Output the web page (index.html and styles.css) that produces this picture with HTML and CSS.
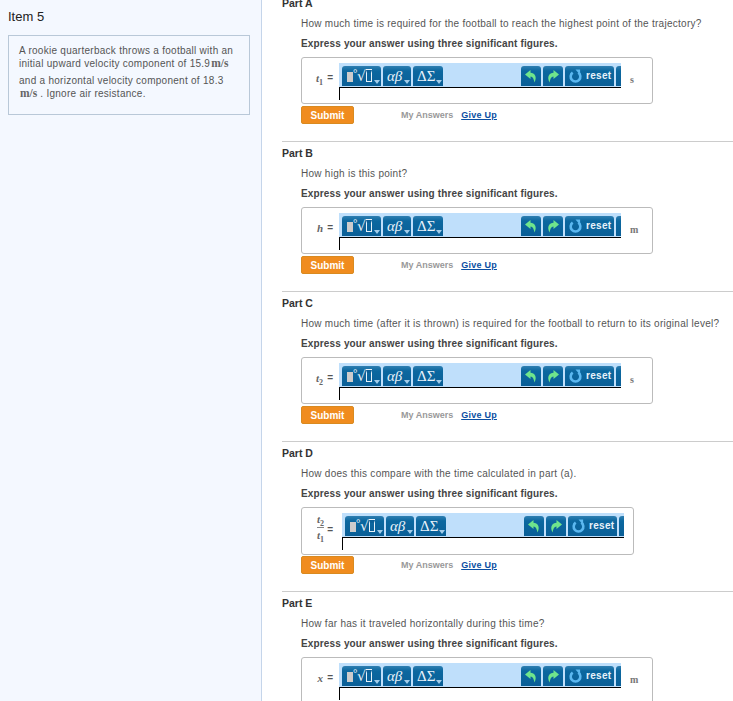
FILE: index.html
```html
<!DOCTYPE html>
<html lang="en">
<head>
    <meta charset="UTF-8">
    <title>Item 5</title>
    <link rel="stylesheet" href="styles.css">
</head>
<body>
<svg class="defs" width="0" height="0">
    <symbol id="undo" viewBox="0 0 16 16"><path d="M2 6.5 L7.5 2 L7.5 4.8 C11.5 5 14.5 8.5 11.5 14.5 C10.8 10.8 10 8.8 7.5 8.4 L7.5 11 Z"/></symbol>
    <symbol id="redo" viewBox="0 0 16 16"><path d="M14 6.5 L8.5 2 L8.5 4.8 C4.5 5 1.5 8.5 4.5 14.5 C5.2 10.8 6 8.8 8.5 8.4 L8.5 11 Z"/></symbol>
    <symbol id="circle-arrow" viewBox="0 0 14 14"><path class="ring" d="M4 3.4 A5.2 5.2 0 1 0 10 3.4"/><path class="head" d="M7 0 L12 0 L12 6 Z"/></symbol>
</svg>
<div class="page">
    <aside class="sidebar">
        <h2 class="item-title">Item 5</h2>
        <div class="intro">
            <p>A rookie quarterback throws a football with an initial upward velocity component of 15.9<span class="unit">m/s</span></p>
            <p>and a horizontal velocity component of 18.3 <span class="unit">m/s</span> . Ignore air resistance.</p>
        </div>
    </aside>
    <main class="content">
        <section class="part part-a">
            <h3>Part A</h3>
            <p class="question">How much time is required for the football to reach the highest point of the trajectory?</p>
            <p class="instruction">Express your answer using three significant figures.</p>
            <div class="answer-box">
                <span class="var"><i>t</i><sub>1</sub></span><span class="eq">=</span>
                <div class="editor">
                    <div class="toolbar">
                        <span class="tool templates"><b class="blank"></b><b class="deg">°</b><b class="root">√</b><b class="box"></b><u></u></span>
                        <span class="tool greek"><i>αβ</i><u></u></span>
                        <span class="tool symbols">ΔΣ<u></u></span>
                        <span class="tool arrow push"><svg><use href="#undo"/></svg></span>
                        <span class="tool arrow"><svg><use href="#redo"/></svg></span>
                        <span class="tool reset"><svg><use href="#circle-arrow"/></svg>reset</span>
                        <span class="tool stub"></span>
                    </div>
                    <div class="field"></div>
                </div>
                <span class="answer-unit">s</span>
            </div>
            <div class="actions"><button>Submit</button><span class="my-answers">My Answers</span><a>Give Up</a></div>
        </section>
        <section class="part">
            <h3>Part B</h3>
            <p class="question">How high is this point?</p>
            <p class="instruction">Express your answer using three significant figures.</p>
            <div class="answer-box">
                <span class="var"><i>h</i></span><span class="eq">=</span>
                <div class="editor">
                    <div class="toolbar">
                        <span class="tool templates"><b class="blank"></b><b class="deg">°</b><b class="root">√</b><b class="box"></b><u></u></span>
                        <span class="tool greek"><i>αβ</i><u></u></span>
                        <span class="tool symbols">ΔΣ<u></u></span>
                        <span class="tool arrow push"><svg><use href="#undo"/></svg></span>
                        <span class="tool arrow"><svg><use href="#redo"/></svg></span>
                        <span class="tool reset"><svg><use href="#circle-arrow"/></svg>reset</span>
                        <span class="tool stub"></span>
                    </div>
                    <div class="field"></div>
                </div>
                <span class="answer-unit">m</span>
            </div>
            <div class="actions"><button>Submit</button><span class="my-answers">My Answers</span><a>Give Up</a></div>
        </section>
        <section class="part">
            <h3>Part C</h3>
            <p class="question">How much time (after it is thrown) is required for the football to return to its original level?</p>
            <p class="instruction">Express your answer using three significant figures.</p>
            <div class="answer-box">
                <span class="var"><i>t</i><sub>2</sub></span><span class="eq">=</span>
                <div class="editor">
                    <div class="toolbar">
                        <span class="tool templates"><b class="blank"></b><b class="deg">°</b><b class="root">√</b><b class="box"></b><u></u></span>
                        <span class="tool greek"><i>αβ</i><u></u></span>
                        <span class="tool symbols">ΔΣ<u></u></span>
                        <span class="tool arrow push"><svg><use href="#undo"/></svg></span>
                        <span class="tool arrow"><svg><use href="#redo"/></svg></span>
                        <span class="tool reset"><svg><use href="#circle-arrow"/></svg>reset</span>
                        <span class="tool stub"></span>
                    </div>
                    <div class="field"></div>
                </div>
                <span class="answer-unit">s</span>
            </div>
            <div class="actions"><button>Submit</button><span class="my-answers">My Answers</span><a>Give Up</a></div>
        </section>
        <section class="part">
            <h3>Part D</h3>
            <p class="question">How does this compare with the time calculated in part (a).</p>
            <p class="instruction">Express your answer using three significant figures.</p>
            <div class="answer-box ratio">
                <span class="var frac"><span class="num"><i>t</i><sub>2</sub></span><span class="den"><i>t</i><sub>1</sub></span></span><span class="eq">=</span>
                <div class="editor">
                    <div class="toolbar">
                        <span class="tool templates"><b class="blank"></b><b class="deg">°</b><b class="root">√</b><b class="box"></b><u></u></span>
                        <span class="tool greek"><i>αβ</i><u></u></span>
                        <span class="tool symbols">ΔΣ<u></u></span>
                        <span class="tool arrow push"><svg><use href="#undo"/></svg></span>
                        <span class="tool arrow"><svg><use href="#redo"/></svg></span>
                        <span class="tool reset"><svg><use href="#circle-arrow"/></svg>reset</span>
                        <span class="tool stub"></span>
                    </div>
                    <div class="field"></div>
                </div>
            </div>
            <div class="actions"><button>Submit</button><span class="my-answers">My Answers</span><a>Give Up</a></div>
        </section>
        <section class="part">
            <h3>Part E</h3>
            <p class="question">How far has it traveled horizontally during this time?</p>
            <p class="instruction">Express your answer using three significant figures.</p>
            <div class="answer-box">
                <span class="var"><i>x</i></span><span class="eq">=</span>
                <div class="editor">
                    <div class="toolbar">
                        <span class="tool templates"><b class="blank"></b><b class="deg">°</b><b class="root">√</b><b class="box"></b><u></u></span>
                        <span class="tool greek"><i>αβ</i><u></u></span>
                        <span class="tool symbols">ΔΣ<u></u></span>
                        <span class="tool arrow push"><svg><use href="#undo"/></svg></span>
                        <span class="tool arrow"><svg><use href="#redo"/></svg></span>
                        <span class="tool reset"><svg><use href="#circle-arrow"/></svg>reset</span>
                        <span class="tool stub"></span>
                    </div>
                    <div class="field"></div>
                </div>
                <span class="answer-unit">m</span>
            </div>
        </section>
    </main>
</div>
</body>
</html>
```

FILE: styles.css
```css
html, body {
    margin: 0;
    padding: 0;
    height: 701px;
    overflow: hidden;
}
body {
    font-family: "Liberation Sans", Arial, sans-serif;
    font-size: 10px;
    color: #333;
    background-color: #fff;
}
.defs {
    display: block;
    height: 0;
}
.page {
    display: flex;
    height: 701px;
    overflow: hidden;
}

/* left column */
.sidebar {
    width: 261px;
    flex: none;
    background-color: #f4f8ff;
    border-right: 1px solid #c5d5ea;
    padding-top: 9px;
}
.item-title {
    margin: 0 0 0 8px;
    font-size: 13px;
    font-weight: normal;
    line-height: 16px;
    color: #222;
}
.intro {
    width: 220px;
    margin: 10px 0 0 8px;
    padding: 9px 10px 9px 10px;
    border: 1px solid #b9c8d8;
    line-height: 12.5px;
    color: #555;
    letter-spacing: 0.27px;
}
.intro p {
    margin: 0 0 5px 0;
}
.unit {
    padding-left: 1px;
    font-family: "Liberation Serif", serif;
    font-weight: bold;
    font-size: 11.5px;
    line-height: 0;
    color: #666;
    letter-spacing: 0;
}

/* parts */
.content {
    flex: 1;
    padding-left: 20px;
    margin-top: -4px;
}
.part {
    height: 149px;
    border-top: 1px solid #ccc;
}
.part-a {
    height: 145px;
    border-top: 0;
}
.part h3 {
    margin: 0;
    padding-top: 5px;
    font-size: 10.5px;
    line-height: 13px;
    color: #333;
}
.part-a h3 {
    padding-top: 1px;
}
.question {
    margin: 8px 0 0 19px;
    line-height: 12px;
    color: #555;
    letter-spacing: 0.27px;
}
.instruction {
    margin: 8px 0 0 19px;
    line-height: 12px;
    font-weight: bold;
    color: #444;
    letter-spacing: 0.15px;
}

/* answer box */
.answer-box {
    display: flex;
    align-items: flex-start;
    width: 350px;
    height: 45px;
    margin: 7px 0 0 19px;
    border: 1px solid #bbb;
    border-radius: 3px;
    background-color: #fff;
}
.answer-box.ratio {
    width: 331px;
    height: 46px;
}
.var {
    width: 21px;
    margin-top: 14px;
    text-align: right;
    font-family: "Liberation Serif", serif;
    font-size: 11px;
    font-weight: bold;
    color: #666;
    white-space: nowrap;
}
.var sub {
    font-size: 8px;
    line-height: 0;
}
.eq {
    width: 10px;
    margin-top: 14px;
    text-align: right;
    font-weight: bold;
    color: #555;
}
.frac {
    display: flex;
    flex-direction: column;
    width: 22px;
    margin-top: 4px;
    align-items: flex-end;
    line-height: 13px;
}
.frac .num {
    border-bottom: 1px solid #888;
    padding: 1px 0 1px;
}
.frac .den {
    padding: 1px 0 0;
}
.ratio .eq {
    margin-top: 16px;
    width: 9px;
}
.ratio .editor {
    margin-left: 9px;
}
.editor {
    width: 282px;
    margin: 5px 0 0 6px;
}
.toolbar {
    display: flex;
    align-items: flex-end;
    gap: 2px;
    height: 23px;
    padding: 0 0 1px 3px;
    background-color: #bfdffb;
    overflow: hidden;
}
.tool {
    display: block;
    position: relative;
    box-sizing: border-box;
    height: 20px;
    line-height: 20px;
    flex: none;
    background: linear-gradient(#2f7fb2, #0b679f 25%, #0a5f97);
    border-radius: 3px 3px 0 0;
    color: #e8f2fa;
    font-family: "Liberation Serif", serif;
    font-size: 15px;
    text-align: left;
}
.tool u {
    position: absolute;
    right: 1px;
    bottom: 2px;
    border-left: 3px solid transparent;
    border-right: 3px solid transparent;
    border-top: 4px solid #a4cdea;
}
.templates {
    width: 39px;
}
.templates b {
    position: absolute;
    font-weight: normal;
}
.templates .blank {
    left: 5px;
    top: 6px;
    width: 6px;
    height: 10px;
    background-color: #ccc;
}
.templates .deg {
    left: 11px;
    top: -3px;
    font-size: 11px;
    font-weight: bold;
}
.templates .root {
    left: 15px;
    top: 0;
    font-family: "DejaVu Sans", sans-serif;
    font-size: 14px;
}
.templates .box {
    left: 24px;
    top: 4px;
    width: 4px;
    height: 8px;
    border: 1px solid #e8f2fa;
    border-top-width: 3px;
    border-top-color: #0a5f97;
    box-shadow: 0 -1px 0 #e8f2fa;
}
.greek {
    width: 28px;
    text-indent: 4px;
}
.symbols {
    width: 30px;
    text-indent: 4px;
}
.arrow {
    width: 20px;
}
.arrow svg {
    display: block;
    width: 16px;
    height: 16px;
    margin: 2px;
    fill: #6fe58c;
}
.push {
    margin-left: 76px;
}
.reset {
    width: 49px;
    font-family: "Liberation Sans", Arial, sans-serif;
    font-size: 10px;
    font-weight: bold;
    letter-spacing: 0.3px;
    white-space: nowrap;
    padding-left: 21px;
}
.reset svg {
    position: absolute;
    left: 4px;
    top: 3px;
    width: 13px;
    height: 14px;
}
.ring {
    fill: none;
    stroke: #5cb8f0;
    stroke-width: 2.8;
}
.head {
    fill: #5cb8f0;
}
.stub {
    width: 10px;
}
.field {
    height: 12px;
    border-top: 1px solid #000;
    border-left: 1px solid #000;
}
.answer-unit {
    margin: 16px 0 0 9px;
    font-family: "Liberation Serif", serif;
    font-weight: bold;
    font-size: 10px;
    color: #777;
}

/* submit row */
.actions {
    display: flex;
    align-items: center;
    height: 18px;
    margin: 2px 0 0 19px;
}
.ratio + .actions {
    margin-top: 1px;
}
.actions button {
    width: 53px;
    height: 18px;
    padding: 0;
    border: 1px solid #d98a20;
    border-radius: 2px;
    background-color: #f08c1e;
    color: #fff;
    font-family: "Liberation Sans", Arial, sans-serif;
    font-size: 10px;
    font-weight: bold;
}
.my-answers {
    margin-left: 47px;
    font-size: 9px;
    font-weight: bold;
    color: #999;
}
.actions a {
    margin-left: 8px;
    font-size: 9px;
    font-weight: bold;
    letter-spacing: 0.25px;
    color: #0b4ea2;
    text-decoration: underline;
}
```
